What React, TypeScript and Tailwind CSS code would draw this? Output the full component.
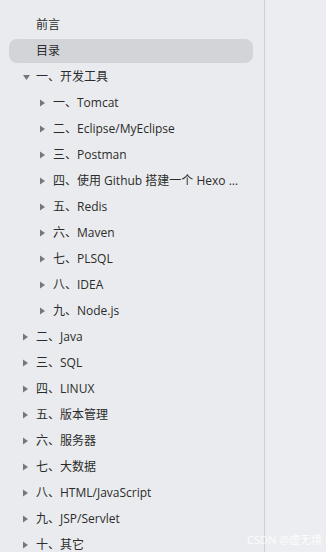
import React from 'react'

type Item = {
    label: string
    level: 0 | 1 | 2
    arrow?: 'right' | 'down'
    active?: boolean
}

const items: Item[] = [
    { label: '前言', level: 0 },
    { label: '目录', level: 0, active: true },
    { label: '一、开发工具', level: 1, arrow: 'down' },
    { label: '一、Tomcat', level: 2, arrow: 'right' },
    { label: '二、Eclipse/MyEclipse', level: 2, arrow: 'right' },
    { label: '三、Postman', level: 2, arrow: 'right' },
    { label: '四、使用 Github 搭建一个 Hexo 个人博客', level: 2, arrow: 'right' },
    { label: '五、Redis', level: 2, arrow: 'right' },
    { label: '六、Maven', level: 2, arrow: 'right' },
    { label: '七、PLSQL', level: 2, arrow: 'right' },
    { label: '八、IDEA', level: 2, arrow: 'right' },
    { label: '九、Node.js', level: 2, arrow: 'right' },
    { label: '二、Java', level: 1, arrow: 'right' },
    { label: '三、SQL', level: 1, arrow: 'right' },
    { label: '四、LINUX', level: 1, arrow: 'right' },
    { label: '五、版本管理', level: 1, arrow: 'right' },
    { label: '六、服务器', level: 1, arrow: 'right' },
    { label: '七、大数据', level: 1, arrow: 'right' },
    { label: '八、HTML/JavaScript', level: 1, arrow: 'right' },
    { label: '九、JSP/Servlet', level: 1, arrow: 'right' },
    { label: '十、其它', level: 1, arrow: 'right' },
]

const Arrow = ({ dir }: { dir: 'right' | 'down' }) =>
    dir === 'right' ? (
        <svg width="5" height="8" viewBox="0 0 5 8" className="block">
            <path d="M0 0.5 L5 4 L0 7.5 Z" fill="#777" />
        </svg>
    ) : (
        <svg width="7" height="5" viewBox="0 0 7 5" className="block">
            <path d="M0 0 L7 0 L3.5 5 Z" fill="#777" />
        </svg>
    )

const Row = ({ item }: { item: Item }) => {
    const indent =
        item.level === 0 ? 'pl-[27px]' : item.level === 1 ? 'pl-[14px]' : 'pl-[31px]'

    return (
        <div className="h-[26px] flex items-center">
            <div
                className={
                    'ml-[9px] w-[244px] h-[24px] flex items-center rounded-[8px] ' +
                    indent +
                    (item.active ? ' bg-[#d3d4d8]' : '')
                }
            >
                {item.arrow && (
                    <span className="w-[13px] flex items-center shrink-0">
                        <Arrow dir={item.arrow} />
                    </span>
                )}
                <span className="truncate pr-[8px] text-[12px] text-[#2b2b2b] leading-[16px]">
                    {item.label}
                </span>
            </div>
        </div>
    )
}

export default function App() {
    return (
        <div
            className="w-[326px] h-[552px] overflow-hidden flex bg-[#ebebee] relative"
            style={{ fontFamily: '"Open Sans", "Noto Sans CJK SC", sans-serif' }}
        >
            <div className="w-[265px] shrink-0 border-r border-[#cfd0d4] pt-[12px] bg-[#eaebee]">
                {items.map((item) => (
                    <Row key={item.label} item={item} />
                ))}
            </div>
            <div className="flex-1 bg-[#ecedf0]" />
            <span className="absolute right-[4px] bottom-[7px] text-[11px] text-white/80 leading-none">
                CSDN @虚无境
            </span>
        </div>
    )
}
